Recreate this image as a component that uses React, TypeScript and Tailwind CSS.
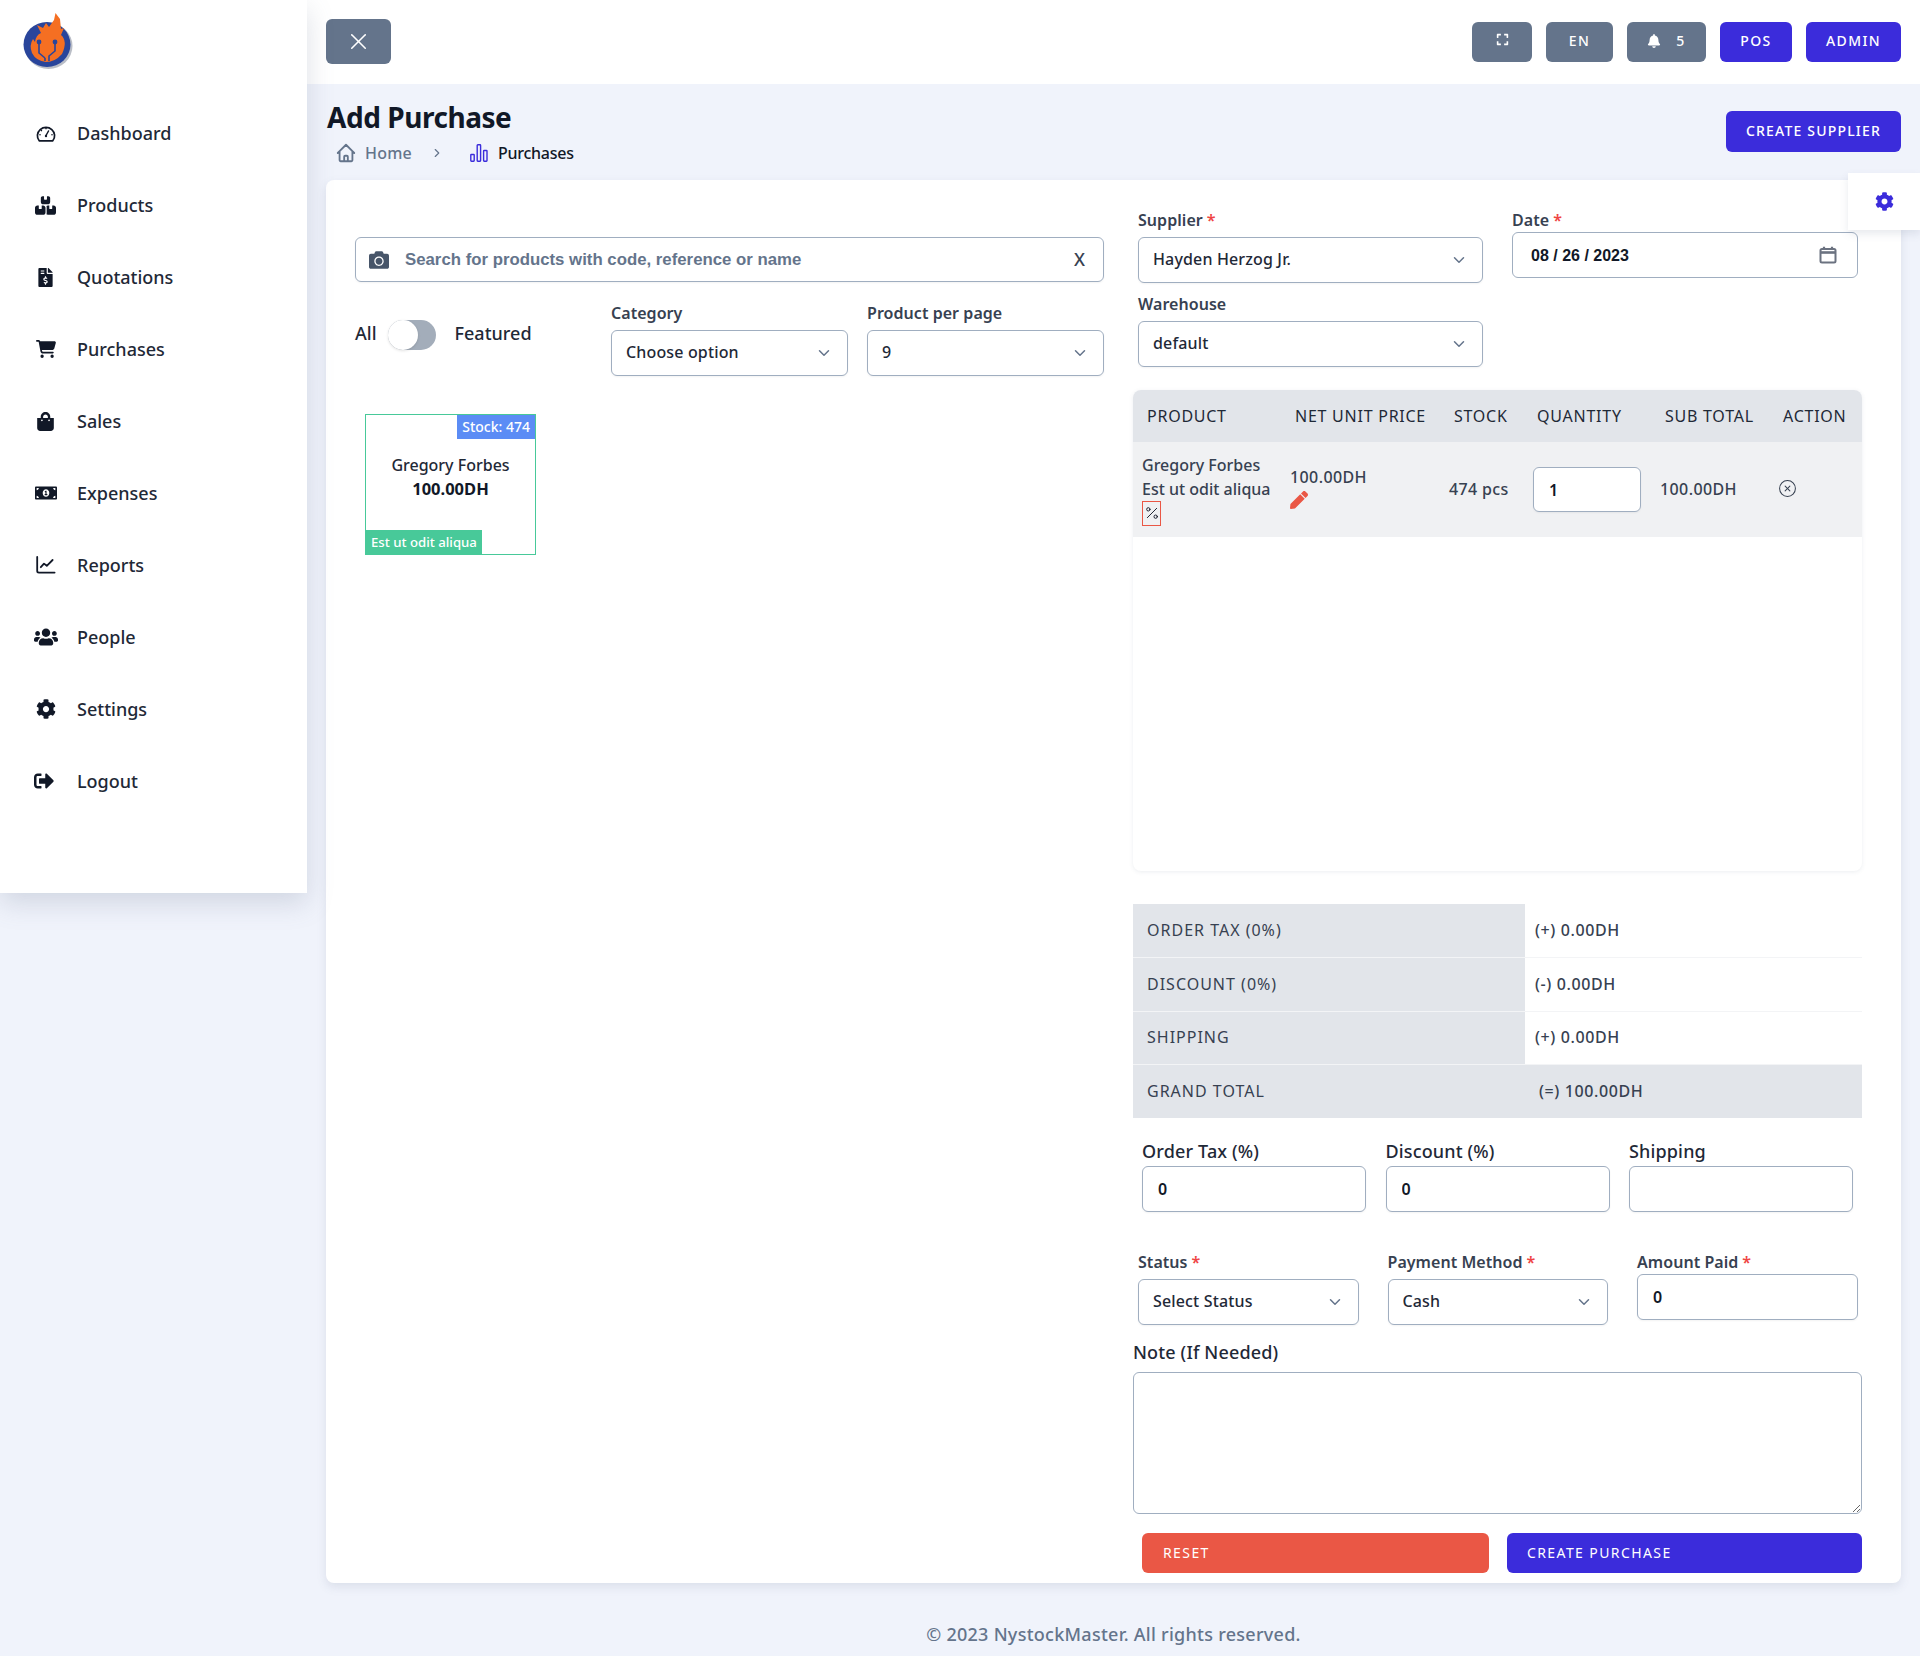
import React from "react";
import { ChevronDown, ChevronRight, X, Percent, CircleX } from "lucide-react";
import {
  FaFileInvoiceDollar, FaShoppingBag, FaMoneyBillAlt,
  FaUsers, FaCog, FaSignOutAlt, FaCamera, FaBell, FaExpand, FaPen,
} from "react-icons/fa";
import { FaBoxesStacked, FaCartShopping } from "react-icons/fa6";
import { HiOutlineHome } from "react-icons/hi";

const F = "font-['Noto_Sans',sans-serif]";

function Gauge() {
  return (
    <svg viewBox="0 0 20 18" className="w-[20px] h-[18px]" fill="none" stroke="currentColor">
      <path d="M3.2 16.8 A8.6 8.3 0 1 1 16.8 16.8 Z" strokeWidth="1.7" strokeLinejoin="round" />
      <path d="M10 11.5 L12.5 7" strokeWidth="1.5" strokeLinecap="round" />
      <circle cx="10" cy="12" r="1.2" fill="currentColor" stroke="none" />
      <g fill="currentColor" stroke="none">
        <circle cx="10" cy="4.6" r=".8" />
        <circle cx="5.4" cy="6.6" r=".8" />
        <circle cx="4" cy="10.8" r=".8" />
        <circle cx="16" cy="10.8" r=".8" />
      </g>
    </svg>
  );
}

function ReportsIcon() {
  return (
    <svg viewBox="0 0 20 18" className="w-[20px] h-[18px]" fill="none" stroke="currentColor" strokeWidth="1.8" strokeLinecap="round" strokeLinejoin="round">
      <path d="M1.2 1 V15 Q1.2 16.6 3 16.6 H18.6" />
      <path d="M4.8 11.2 L8 7.6 L10.8 9.8 L16.6 4" />
    </svg>
  );
}

function BarsIcon() {
  return (
    <svg viewBox="0 0 18 18" className="w-[18px] h-[18px] text-[#3b2cdb]" fill="none" stroke="currentColor" strokeWidth="1.4">
      <rect x=".8" y="10.5" width="3.4" height="6.7" rx=".6" />
      <rect x="7.2" y=".8" width="3.4" height="16.4" rx=".6" />
      <rect x="13.6" y="6.5" width="3.4" height="10.7" rx=".6" />
    </svg>
  );
}

function Logo() {
  return (
    <svg viewBox="0 0 52 56" className="w-[52px] h-[56px]">
      <ellipse cx="26.5" cy="33" rx="24" ry="23" fill="#9ca3af" opacity=".7" />
      <ellipse cx="25" cy="31.5" rx="23.5" ry="22.5" fill="#29459b" />
      <path
        d="M15 12 L21 15 L24 10 L27 14 L32 7 L33.5 0 L38 6 L39 16 L42 15 L39 22 Q46 28 40 41 Q33 49 24 49 Q14 48 10 40 Q7 32 11 26 L13 29 Q14 22 19 20 Z"
        fill="#f56f22"
      />
      <g stroke="#29459b" strokeWidth="1.6" fill="none">
        <path d="M17 30 V40 L23 45" />
        <path d="M33 30 V38 L27 43 V48" />
        <path d="M23 45 V48" />
      </g>
      <circle cx="17" cy="29" r="2.4" fill="#29459b" />
      <circle cx="33" cy="29" r="2.4" fill="#29459b" />
    </svg>
  );
}

const nav: [string, React.ReactNode][] = [
  ["Dashboard", <Gauge />],
  ["Products", <FaBoxesStacked className="text-[21px] -ml-[1px]" />],
  ["Quotations", <FaFileInvoiceDollar className="text-[19px] -ml-[1px]" />],
  ["Purchases", <FaCartShopping className="text-[20px] -ml-[1px]" />],
  ["Sales", <FaShoppingBag className="text-[19px] -ml-[1px]" />],
  ["Expenses", <FaMoneyBillAlt className="text-[22px] -ml-[1px]" />],
  ["Reports", <ReportsIcon />],
  ["People", <FaUsers className="text-[24px] -ml-[1px]" />],
  ["Settings", <FaCog className="text-[20px] -ml-[1px]" />],
  ["Logout", <FaSignOutAlt className="text-[20px] -ml-[5px]" />],
];

function Req() {
  return <span className="text-[#ef4444] ml-[4px]">*</span>;
}

function Label({ children, req }: { children: React.ReactNode; req?: boolean }) {
  return (
    <label className="block h-[22px] leading-[22px] text-[16px] font-semibold text-[#374151] tracking-[0.05px]">
      {children}
      {req && <Req />}
    </label>
  );
}

function Select({ value, className = "" }: { value: string; className?: string }) {
  return (
    <div className={`relative h-[46px] ${className}`}>
      <select
        defaultValue={value}
        className="appearance-none w-full h-full rounded-[6px] border border-[#a0aec0] bg-white pl-[14px] pr-[40px] pb-[2px] text-[16px] font-medium text-[#1f2937] tracking-[0.15px] shadow-[0_1px_2px_rgba(0,0,0,0.05)]"
      >
        <option>{value}</option>
      </select>
      <ChevronDown className="absolute right-[15px] top-[14px] w-[18px] h-[18px] text-[#64748b] pointer-events-none" strokeWidth={2} />
    </div>
  );
}

function Input({ value = "", className = "" }: { value?: string; className?: string }) {
  return (
    <input
      defaultValue={value}
      className={`block h-[46px] w-full rounded-[6px] border border-[#a0aec0] bg-white px-[15px] text-[16px] font-semibold text-[#111827] shadow-[0_1px_2px_rgba(0,0,0,0.05)] ${className}`}
    />
  );
}

function TopBtn({ children, className }: { children: React.ReactNode; className: string }) {
  return (
    <button className={`h-[40px] pb-[3px] rounded-[6px] flex items-center justify-center text-white text-[14px] font-medium tracking-[0.1em] ${className}`}>
      {children}
    </button>
  );
}

const thCls = "px-[14px] text-left font-normal text-[16px] text-[#1f2937] uppercase tracking-[0.75px] whitespace-nowrap";
const tdCls = "px-[9px] text-[16px] font-medium text-[#374151] align-middle";

function SummaryRow({ label, value, last }: { label: string; value: string; last?: boolean }) {
  return (
    <tr className={`h-[53.5px] ${last ? "bg-[#e2e5ea]" : "border-b border-[#f3f4f6]"}`}>
      <td className={`w-[392px] pl-[14px] pb-[1px] text-[16px] font-normal tracking-[1px] text-[#374151] ${last ? "" : "bg-[#e2e5ea]"}`}>{label}</td>
      <td className={`pb-[1px] text-[16px] font-medium tracking-[0.6px] text-[#374151] ${last ? "pl-[14px]" : "pl-[10px]"}`}>{value}</td>
    </tr>
  );
}

export default function App() {
  return (
    <div className={`${F} flex min-h-[1656px] bg-[#f0f3fb] text-[#1f2937]`}>
      <aside className="w-[307px] h-[893px] shrink-0 bg-white shadow-[0_10px_25px_rgba(100,116,139,0.22)] relative z-10">
        <div className="h-[78px] pl-[22px] pt-[13px]">
          <Logo />
        </div>
        <nav className="pt-[19px] flex flex-col">
          {nav.map(([name, icon]) => (
            <a key={name} className="h-[72px] flex items-center text-[18px] font-medium text-[#1f2937]">
              <span className="w-[24px] ml-[34px] flex justify-center text-[#111827]">{icon}</span>
              <span className="ml-[19px]">{name}</span>
            </a>
          ))}
        </nav>
      </aside>

      <main className="flex-1 min-w-0 relative">
        <header className="h-[84px] bg-white flex items-center justify-between px-[19px]">
          <button className="w-[65px] h-[45px] -mt-[1px] rounded-[6px] bg-[#64748b] flex items-center justify-center text-white">
            <X className="w-[27px] h-[27px]" strokeWidth={1.4} />
          </button>
          <div className="flex gap-[14px] items-center">
            <TopBtn className="w-[60px] bg-[#64748b]"><FaExpand className="text-[13px] -mt-[2px]" /></TopBtn>
            <TopBtn className="w-[67px] bg-[#64748b]">EN</TopBtn>
            <TopBtn className="w-[79px] bg-[#64748b] gap-[15px]"><FaBell className="text-[14px]" />5</TopBtn>
            <TopBtn className="w-[72px] bg-[#3b2cdb]">POS</TopBtn>
            <TopBtn className="w-[95px] bg-[#3b2cdb]">ADMIN</TopBtn>
          </div>
        </header>

        <div className="h-[96px] px-[19px] flex justify-between">
          <div>
            <h1 className="text-[28px] leading-[40px] mt-[13px] ml-[1px] font-bold text-[#111827] tracking-[-0.45px]">Add Purchase</h1>
            <div className="flex items-center mt-[2px] ml-[9px] text-[16px] h-[28px]">
              <HiOutlineHome className="w-[22px] h-[22px] text-[#64748b]" />
              <span className="ml-[8px] text-[#64748b] font-medium tracking-[0.2px]">Home</span>
              <ChevronRight className="w-[14px] h-[14px] ml-[18px] text-[#64748b]" />
              <span className="ml-[26px]"><BarsIcon /></span>
              <span className="ml-[10px] font-medium text-[#111827] tracking-[-0.25px]">Purchases</span>
            </div>
          </div>
          <button className="mt-[27px] w-[175px] h-[41px] pb-[2px] rounded-[6px] bg-[#3b2cdb] text-white text-[14px] font-medium tracking-[0.085em]">
            CREATE SUPPLIER
          </button>
        </div>

        <div className="absolute right-0 top-[173px] w-[72px] h-[57px] bg-white shadow-[0_4px_8px_rgba(100,116,139,0.15)] z-10 flex items-center pl-[27px]">
          <FaCog className="text-[19px] text-[#3b2cdb]" />
        </div>

        <section className="mx-[19px] h-[1403px] rounded-[8px] bg-white shadow-[0_4px_10px_rgba(100,116,139,0.15)] flex pl-[29px] pr-[39px] gap-[29px]">
          <div className="w-[749px] shrink-0 pt-[57px]">
            <div className="h-[45px] rounded-[6px] border border-[#a0aec0] flex items-center pl-[13px] pr-[18px] shadow-[0_1px_2px_rgba(0,0,0,0.05)] font-['Liberation_Sans',sans-serif] font-bold text-[16.8px] text-[#64748b]">
              <FaCamera className="text-[20px] text-[#475569]" />
              <span className="ml-[16px] flex-1">Search for products with code, reference or name</span>
              <span className={`${F} font-medium text-[18px] text-[#374151]`}>X</span>
            </div>
            <div className="flex mt-[20px]">
              <div className="flex items-start w-[256px] pt-[18px] text-[18px] font-medium">
                <span>All</span>
                <span className="ml-[11px] relative w-[48px] h-[30px] rounded-full bg-[#a3adba] block">
                  <span className="absolute left-0 top-0 w-[30px] h-[30px] rounded-full bg-white shadow-[0_1px_3px_rgba(0,0,0,0.12)]" />
                </span>
                <span className="ml-[19px]">Featured</span>
              </div>
              <div className="w-[237px] mr-[19px]">
                <Label>Category</Label>
                <Select value="Choose option" className="mt-[6px]" />
              </div>
              <div className="w-[237px]">
                <Label>Product per page</Label>
                <Select value="9" className="mt-[6px]" />
              </div>
            </div>
            <div className="ml-[10px] mt-[38px] w-[171px] h-[141px] border border-[#48c999] relative">
              <span className="absolute right-0 top-0 h-[24px] px-[5px] bg-[#5b8cf5] text-white text-[14px] font-medium leading-[24px]">Stock: 474</span>
              <div className="pt-[38px] text-center text-[16px] leading-[24px] font-medium text-[#1f2937]">
                <div>Gregory Forbes</div>
                <div className="font-bold text-[#111827] text-[16.5px]">100.00DH</div>
              </div>
              <span className="absolute left-0 bottom-0 h-[24px] px-[5px] bg-[#48c999] text-white text-[13.2px] font-medium leading-[24px]">Est ut odit aliqua</span>
            </div>
          </div>

          <div className="w-[729px] shrink-0 pt-[29px]">
            <div className="flex gap-[29px] pl-[5px]">
              <div className="w-[345px]">
                <Label req>Supplier</Label>
                <Select value="Hayden Herzog Jr." className="mt-[6px]" />
                <div className="mt-[10px]"><Label>Warehouse</Label></div>
                <Select value="default" className="mt-[6px]" />
              </div>
              <div className="w-[346px]">
                <Label req>Date</Label>
                <div className="mt-[1px] h-[46px] rounded-[6px] border border-[#a0aec0] flex items-center justify-between pl-[18px] pr-[20px] font-['Liberation_Sans',sans-serif] font-bold text-[16px] text-[#111827]">
                  <span className="mt-[1px]">08 / 26 / 2023</span>
                  <svg viewBox="0 0 18 18" className="w-[18px] h-[18px] text-[#6b7280]" fill="none" stroke="currentColor" strokeWidth="2">
                    <rect x="1.5" y="3" width="15" height="13.5" rx="1.5" />
                    <path d="M1.5 6.5 H16.5" strokeWidth="2.6" />
                    <path d="M5 .8 V3 M13 .8 V3" strokeWidth="2.2" />
                  </svg>
                </div>
              </div>
            </div>

            <div className="mt-[23px] h-[481px] rounded-[8px] overflow-hidden shadow-[0_1px_4px_rgba(100,116,139,0.12)]">
              <table className="table-fixed w-[729px] border-collapse">
                <colgroup>
                  <col className="w-[148px]" />
                  <col className="w-[159px]" />
                  <col className="w-[83px]" />
                  <col className="w-[128px]" />
                  <col className="w-[118px]" />
                  <col className="w-[93px]" />
                </colgroup>
                <thead>
                  <tr className="h-[52px] bg-[#e2e5ea]">
                    <th className={thCls}>Product</th>
                    <th className={thCls}>Net Unit Price</th>
                    <th className={thCls}>Stock</th>
                    <th className={thCls}>Quantity</th>
                    <th className={thCls}>Sub Total</th>
                    <th className={thCls}>Action</th>
                  </tr>
                </thead>
                <tbody>
                  <tr className="h-[95px] bg-[#f0f1f3]">
                    <td className={`${tdCls} leading-[24px] whitespace-nowrap`}>
                      <div className="-mt-[1px]">Gregory Forbes</div>
                      <div>Est ut odit aliqua</div>
                      <span className="flex w-[19px] h-[25px] items-center justify-center border border-[#ea5745] text-[#111827]">
                        <Percent className="w-[16px] h-[16px]" strokeWidth={1.4} />
                      </span>
                    </td>
                    <td className={`${tdCls} leading-[24px] align-top pt-[23px] tracking-[0.4px]`}>
                      <div>100.00DH</div>
                      <FaPen className="text-[18px] text-[#ea5745] mt-[2px]" />
                    </td>
                    <td className={`${tdCls} whitespace-nowrap tracking-[0.35px] pb-[2px]`}>474 pcs</td>
                    <td className="px-[10px]">
                      <Input value="1" className="!h-[45px] !w-[108px]" />
                    </td>
                    <td className={`${tdCls} whitespace-nowrap tracking-[0.4px] pb-[2px]`}>100.00DH</td>
                    <td className="px-[9px] pb-[2px]">
                      <CircleX className="w-[19px] h-[19px] text-[#374151]" strokeWidth={1.3} />
                    </td>
                  </tr>
                </tbody>
              </table>
            </div>

            <table className="mt-[33px] w-[729px] border-collapse">
              <tbody>
                <SummaryRow label="ORDER TAX (0%)" value="(+) 0.00DH" />
                <SummaryRow label="DISCOUNT (0%)" value="(-) 0.00DH" />
                <SummaryRow label="SHIPPING" value="(+) 0.00DH" />
                <SummaryRow label="GRAND TOTAL" value="(=) 100.00DH" last />
              </tbody>
            </table>

            <div className="flex gap-[19.5px] pl-[9px] mt-[20px]">
              {[["Order Tax (%)", "0"], ["Discount (%)", "0"], ["Shipping", ""]].map(([l, v]) => (
                <div key={l} className="w-[224px]">
                  <label className="block h-[26px] leading-[26px] text-[18px] font-medium text-[#1f2937] tracking-[0.15px]">{l}</label>
                  <Input value={v} className="mt-[2px]" />
                </div>
              ))}
            </div>

            <div className="flex gap-[29px] pl-[5px] mt-[39px]">
              <div className="w-[220.5px]">
                <Label req>Status</Label>
                <Select value="Select Status" className="mt-[6px]" />
              </div>
              <div className="w-[220.5px]">
                <Label req>Payment Method</Label>
                <Select value="Cash" className="mt-[6px]" />
              </div>
              <div className="w-[220.5px]">
                <Label req>Amount Paid</Label>
                <Input value="0" className="mt-[1px]" />
              </div>
            </div>

            <label className="block mt-[14px] h-[26px] leading-[26px] text-[18px] font-medium text-[#1f2937] tracking-[0.15px]">Note (If Needed)</label>
            <textarea className="block mt-[7px] w-[729px] h-[142px] rounded-[6px] border border-[#a0aec0]" />

            <div className="flex mt-[19px] pl-[9px] gap-[18px]">
              <button className="w-[347px] h-[40px] pb-[2px] rounded-[6px] bg-[#ea5745] text-white text-left pl-[21px] text-[14px] font-normal tracking-[0.1em]">RESET</button>
              <button className="w-[355px] h-[40px] pb-[2px] rounded-[6px] bg-[#3b2cdb] text-white text-left pl-[20px] text-[14px] font-normal tracking-[0.1em]">CREATE PURCHASE</button>
            </div>
          </div>
        </section>

        <footer className="mt-[38px] text-center text-[18px] font-medium text-[#64748b] tracking-[0.27px]">© 2023 NystockMaster. All rights reserved.</footer>
      </main>
    </div>
  );
}
